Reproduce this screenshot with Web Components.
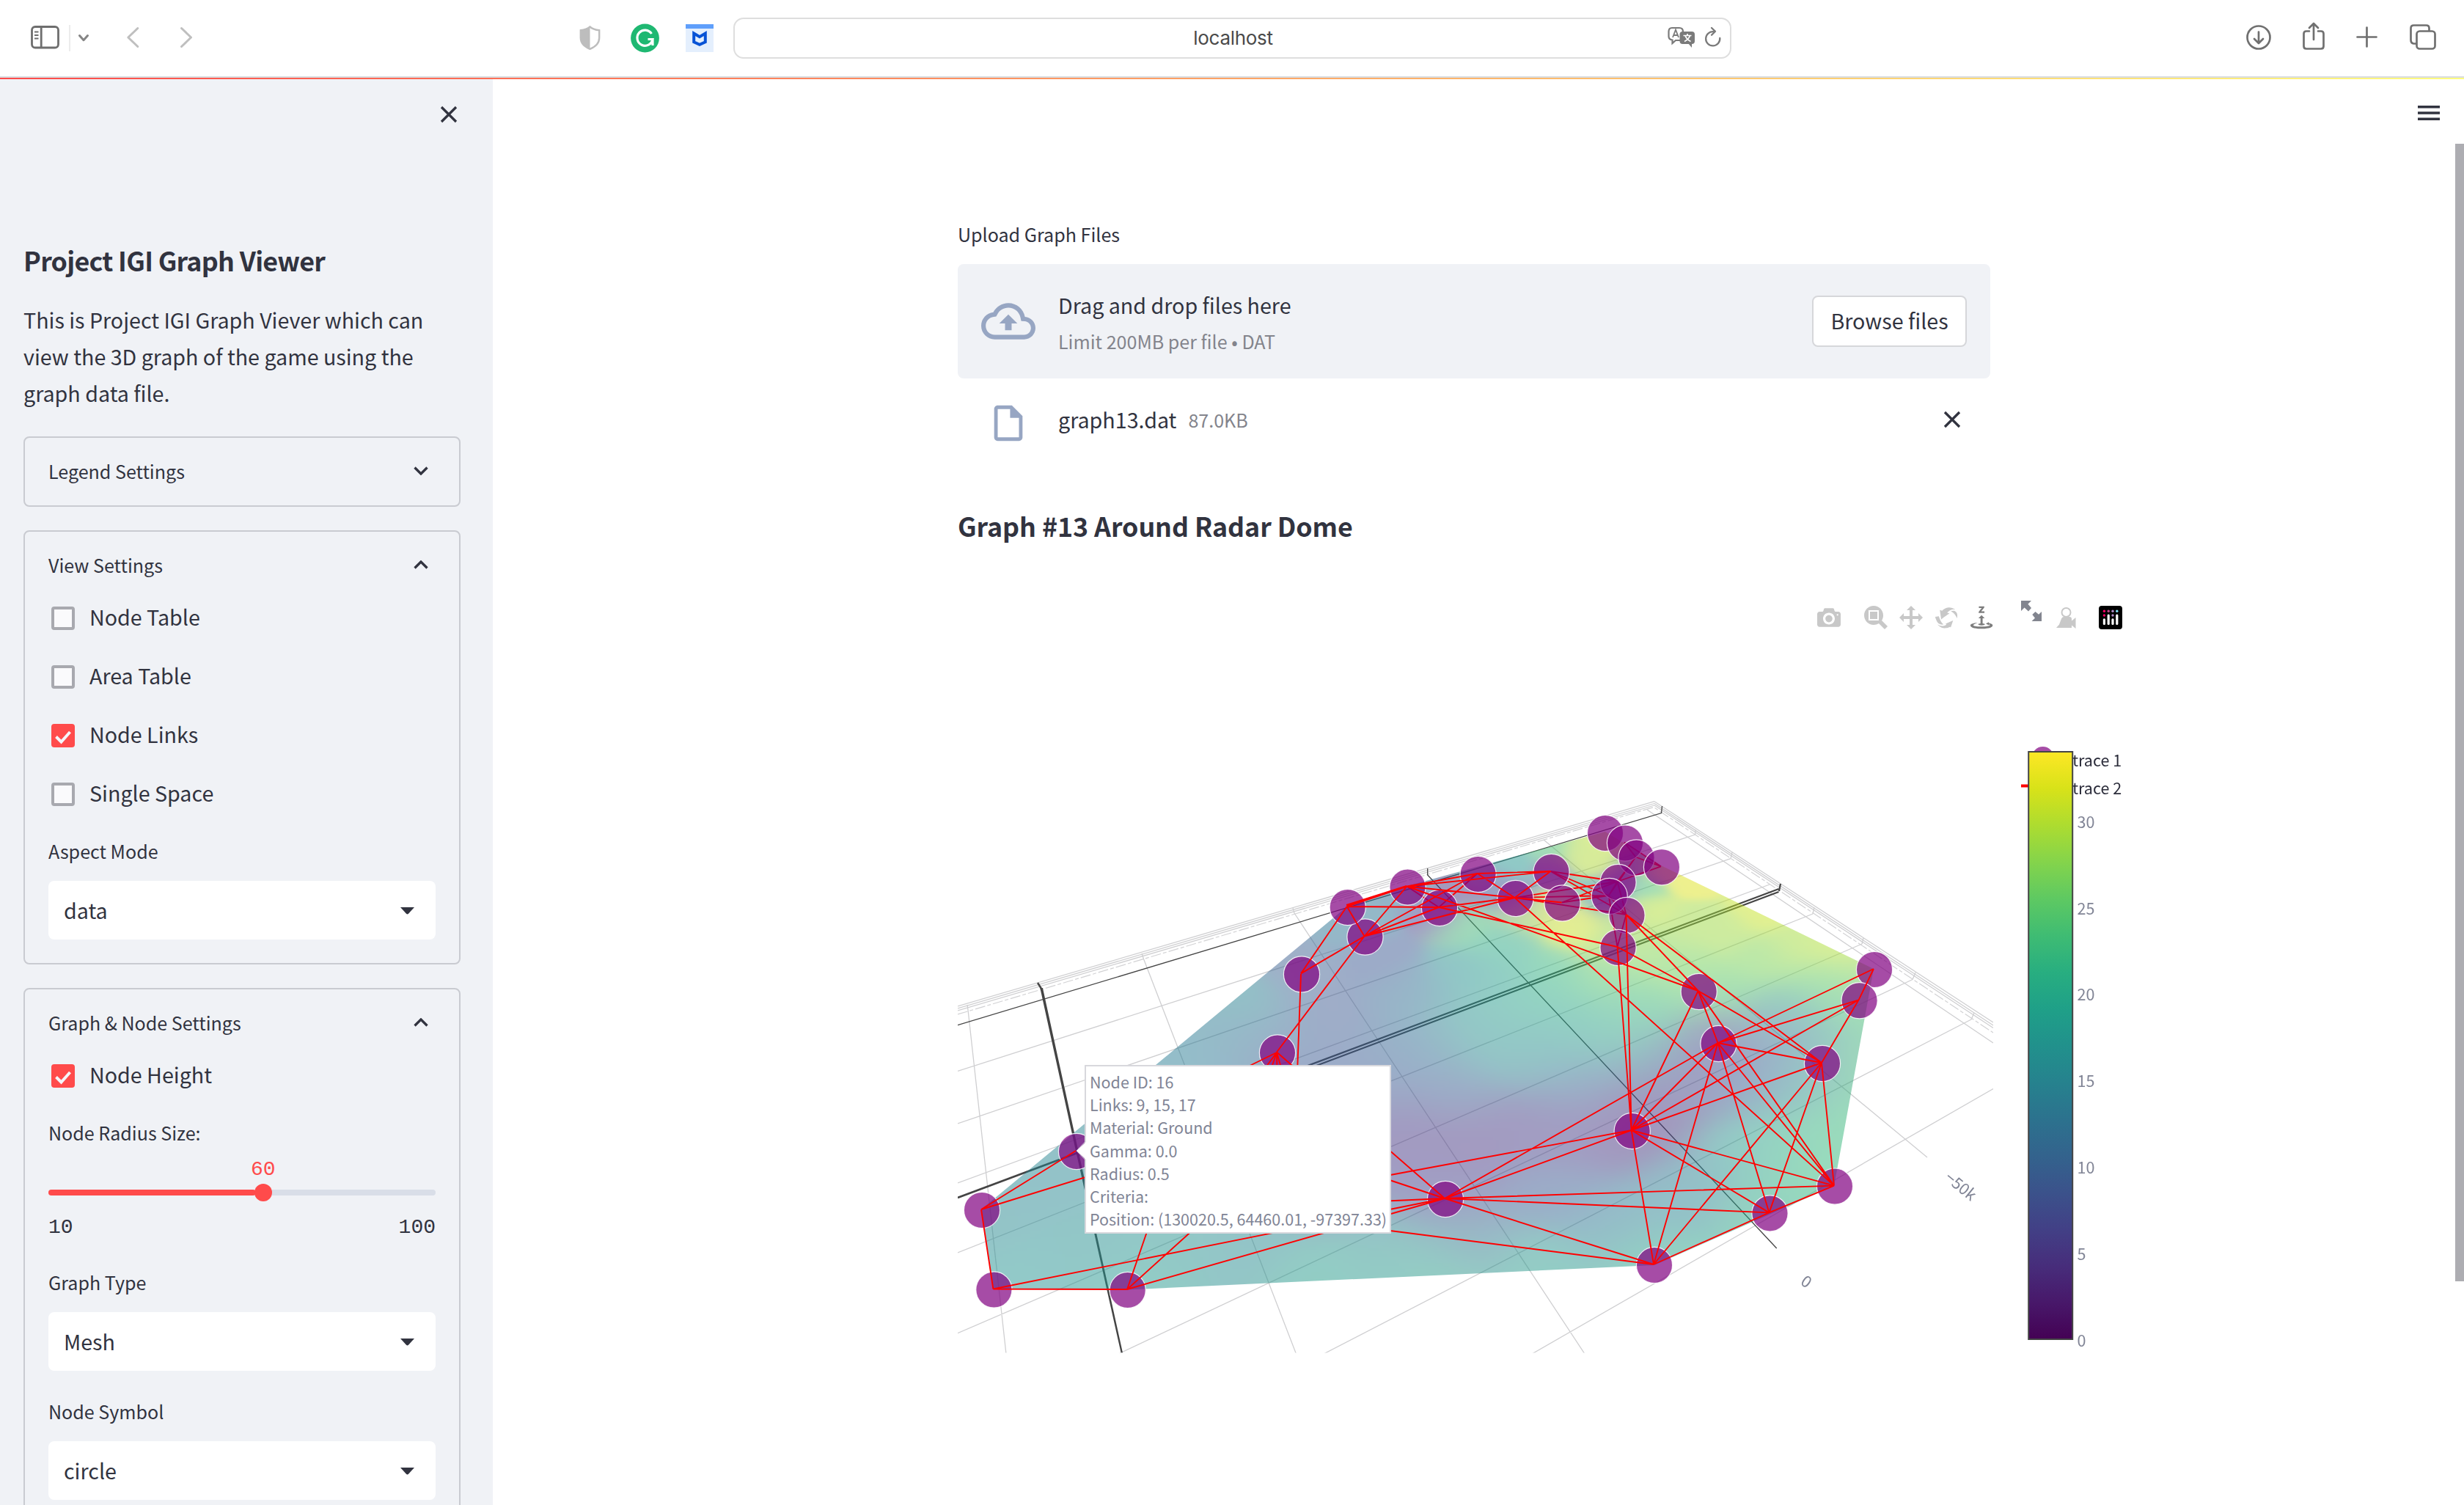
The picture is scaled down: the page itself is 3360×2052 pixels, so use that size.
<!DOCTYPE html>
<html lang="en">
<head>
<meta charset="utf-8">
<title>Project IGI Graph Viewer</title>
<style>
html,body{margin:0;height:2052px;overflow:hidden;background:#fff}
body{font-family:"Noto Sans CJK JP","Noto Sans",sans-serif;color:#31333f;
 --lg:35.8px;--md:28.65px;--sm:25.07px;--xs:21.5px}
</style>
</head>
<body>
<igi-app></igi-app>
<script>
const ICONS={
 side:['42 30 39 44','<g fill="none" stroke="#6e6e6e" stroke-width="2.8"><rect x="43.5" y="36.5" width="36" height="28.5" rx="4.5"/><path d="M56.2 37V65"/><path d="M47 43.5h5.5M47 48h5.5M47 52.5h5.5" stroke-width="2"/></g>'],
 caret:['107 30 14 44','<path d="M108.5 48.5l5.5 6.2 5.5-6.2" fill="none" stroke="#858585" stroke-width="3" stroke-linecap="round" stroke-linejoin="round"/>'],
 back:['172 30 19 44','<path d="M187.8 38.500l-13 12.500 13 12.500" fill="none" stroke="#bfbfbf" stroke-width="3" stroke-linecap="round" stroke-linejoin="round"/>'],
 fwd:['244 30 20 44','<path d="M247.500 38.500l13 12.500-13 12.500" fill="none" stroke="#bfbfbf" stroke-width="3" stroke-linecap="round" stroke-linejoin="round"/>'],
 shield:['790 30 29 44','<path d="M804.500 36.500c4 3.500 8 4.300 12.700 4.800v10c0 7.500-5 12.500-12.700 15.500-7.700-3-12.700-8-12.700-15.500v-10c4.700-.5 8.700-1.300 12.700-4.800z" fill="none" stroke="#bdbdbd" stroke-width="2.400"/><path d="M804.500 36v31c-7.700-3-12.700-8-12.700-15.500v-10c4.700-.5 8.700-1.300 12.700-5.500z" fill="#bdbdbd"/>'],
 gram:['860 30 39 44','<circle cx="879.500" cy="52" r="19.400" fill="#1fb872"/><path d="M888.500 46a10.600 10.600 0 1 0 1.500 7.500h-6.500M890 53.500v8.500" fill="none" stroke="#fff" stroke-width="3.200"/>'],
 mc:['935 30 38 44','<rect x="935" y="33" width="38" height="38" fill="#e4effd"/><rect x="935" y="33" width="38" height="6" fill="#5f9ffb"/><path d="M946.200 45.500l7.800 4.600 7.800-4.600v11.800l-7.800 3.500-7.800-3.500z" fill="none" stroke="#0853d6" stroke-width="4"/>'],
 trans:['2274 30 38 44','<path d="M2280 38h10q5 0 5 5v8q0 4-4 4h-6l-4.500 4v-4.500q-5-.5-5-5v-6.500q0-5 4.500-5z" fill="none" stroke="#7a7a7a" stroke-width="2.200"/><path d="M2281 51l4-10.500 4 10.500M2282.500 48h5" fill="none" stroke="#7a7a7a" stroke-width="1.800"/><rect x="2290.500" y="43" width="20.500" height="17" rx="4" fill="#7a7a7a"/><path d="M2302 59l5 6v-6z" fill="#7a7a7a"/><path d="M2295.500 48.500h11M2301 46v2.500M2297 56.500q6-3 7.500-8M2305.500 56.500q-6-3-7.500-8" fill="none" stroke="#fff" stroke-width="1.700"/>'],
 reload:['2324 30 24 44','<path d="M2337 43.300a9.600 9.600 0 1 0 8.300 8.700" fill="none" stroke="#7a7a7a" stroke-width="2.300" stroke-linecap="round"/><path d="M2333.500 38.500l5 4.800-5 5" transform="translate(.5 -.5)" fill="none" stroke="#7a7a7a" stroke-width="2.300" stroke-linecap="round" stroke-linejoin="round"/>'],
 down:['3062 30 36 44','<g fill="none" stroke="#707070" stroke-width="2.700" stroke-linecap="round" stroke-linejoin="round"><circle cx="3080" cy="51" r="15.500"/><path d="M3080 43.500v15M3074 53l6 6 6-6"/></g>'],
 share:['3139 28 32 44','<g fill="none" stroke="#707070" stroke-width="2.700" stroke-linecap="round" stroke-linejoin="round"><path d="M3149 42.500h-4q-3.500 0-3.500 3.500v17q0 3.500 3.500 3.500h20q3.500 0 3.500-3.500v-17q0-3.500-3.500-3.500h-4"/><path d="M3155 54v-21.500M3149 38l6-6 6 6"/></g>'],
 plus:['3213 30 30 44','<path d="M3227.500 37.500v26M3214.500 50.500h26" stroke="#707070" stroke-width="2.700" stroke-linecap="round"/>'],
 tabs:['3285 30 38 44','<g fill="none" stroke="#707070" stroke-width="2.700"><path d="M3295 59.500h-3.500q-4-.5-4-5v-16q0-4 4-4h17q4 0 4 4v4"/><rect x="3295.500" y="42.500" width="25" height="24" rx="4"/></g>'],
 menu:['0 0 30 20','<path d="M0 0h30v3.600h-30zM0 8.200h30v3.600h-30zM0 16.400h30v3.600h-30z" fill="#31333f"/>'],
 x:['0 0 24 24','<path d="M2 2l20 20M22 2l-20 20" stroke="#31333f" stroke-width="3.300"/>'],
 chev:['0 0 20 12','<path d="M1.500 1.500l8.500 8.500 8.500-8.500" fill="none" stroke="#31333f" stroke-width="3.300"/>'],
 tri:['0 0 19 10','<path d="M0 0h19l-8 8.800q-1.500 1.400-3 0z" fill="#31333f"/>'],
 check:['0 0 32 32','<path d="M6.500 17.500l7 7 12-13.500" fill="none" stroke="#f5f6fa" stroke-width="4"/>'],
 cloud:['0 0 24 24','<path d="M19.350 10.040C18.670 6.590 15.640 4 12 4 9.110 4 6.600 5.640 5.350 8.040 2.340 8.360 0 10.910 0 14c0 3.310 2.690 6 6 6h13c2.760 0 5-2.240 5-5 0-2.640-2.050-4.780-4.650-4.960zM19 18H6c-2.210 0-4-1.790-4-4 0-2.050 1.530-3.760 3.560-3.970l1.070-.11.5-.95C8.080 7.140 9.940 6 12 6c2.620 0 4.880 1.860 5.390 4.430l.3 1.500 1.530.11c1.560.1 2.780 1.410 2.780 2.960 0 1.650-1.350 3-3 3zM8 13h2.550v3h2.900v-3H16l-4-4z" fill="#97a6c3"/>'],
 file:['0 0 24 24','<path d="M6 2c-1.100 0-1.990.9-1.990 2L4 20c0 1.100.89 2 1.990 2H18c1.100 0 2-.9 2-2V8l-6-6H6zm0 18V4h7v5h5v11H6z" fill="#97a6c3"/>'],
 camera:['0 0 1000 1000','<path transform="matrix(1 0 0 -1 0 850)" fill="#c8c8c8" d="m500 450c-83 0-150-67-150-150 0-83 67-150 150-150 83 0 150 67 150 150 0 83-67 150-150 150z m400 150h-120c-16 0-34 13-39 29l-31 93c-6 15-23 28-40 28h-340c-16 0-34-13-39-28l-31-94c-6-15-23-28-40-28h-120c-55 0-100-45-100-100v-450c0-55 45-100 100-100h800c55 0 100 45 100 100v450c0 55-45 100-100 100z m-400-550c-138 0-250 112-250 250 0 138 112 250 250 250 138 0 250-112 250-250 0-138-112-250-250-250z m365 380c-19 0-35 16-35 35 0 19 16 35 35 35 19 0 35-16 35-35 0-19-16-35-35-35z"/>'],
 zoom:['0 0 1000 1000','<path transform="matrix(1 0 0 -1 0 850)" fill="#c8c8c8" d="m1000-25l-250 251c40 63 63 138 63 218 0 224-182 406-407 406-224 0-406-182-406-406s183-406 407-406c80 0 155 22 218 62l250-250 125 125z m-812 250l0 438 437 0 0-438-437 0z m62 375l313 0 0-312-313 0 0 312z"/>'],
 pan:['0 0 1000 1000','<path transform="matrix(1 0 0 -1 0 850)" fill="#c8c8c8" d="m1000 350l-187 188 0-125-250 0 0 250 125 0-188 187-187-187 125 0 0-250-250 0 0 125-188-188 186-187 0 125 252 0 0-250-125 0 187-188 188 188-125 0 0 250 250 0 0-126 187 188z"/>'],
 orbit:['0 0 1000 1000','<path transform="matrix(1 0 0 -1 0 850)" fill="#c8c8c8" d="m922 660c-5 4-9 7-14 11-359 263-580-31-580-31l-102 28 58-400c0 1 1 1 2 2 118 108 351 249 351 249s-62 27-100 42c88 83 222 183 347 122 16-8 30-17 44-27-2 1-4 2-6 4z m36-329c0 0 64 229-88 296-62 27-124 14-175-11 157-78 225-208 249-266 8-19 11-31 11-31 2 5 6 15 11 32-5-13-8-20-8-20z m-775-239c70-31 117-50 198-32-121 80-199 346-199 346l-96-15-58-12c0 0 55-226 155-287z m603 133l-317-139c0 0 4-4 19-14 7-5 24-15 24-15s-177-147-389 4c235-287 536-112 536-112l31-22 100 299-4-1z m-298-153c6-4 15-9 15-9-6 4-11 7-15 9z"/>'],
 table:['0 0 1000 1000','<path transform="matrix(1 0 0 -1 0 850)" fill="#7d7d7d" d="m833 5l-17 108v41l-130-65 130-66c0 0 0 38 0 39 0-1 36-14 39-25 4-15-6-22-16-30-15-12-39-16-56-20-90-22-187-23-279-23-261 0-341 34-353 59 3 60 228 110 228 110-140-8-351-35-351-116 0-120 293-142 474-142 155 0 477 22 477 142 0 50-74 79-163 96z m-374 94c-58-5-99-21-99-40 0-24 65-43 144-43 79 0 143 19 143 43 0 19-42 34-98 40v216h87l-132 135-133-135h88v-216z m167 515h-136v1c16 16 31 34 46 52l84 109v54h-230v-71h124v-1c-16-17-28-32-44-51l-89-114v-51h245v72z"/>'],
 expand:['0 0 28 28','<path d="M0 0h14L0 14zM3 8L8 3L14 10L10 14.500zM28 28h-13.500L28 15zM15.300 19L19.500 15L25.500 20L20 25z" fill="#82858f"/>'],
 last:['0 0 32 32','<circle cx="16.500" cy="9" r="6" fill="none" stroke="#c8c8c8" stroke-width="2"/><path d="M3 30l4-4.500 3-8q1-2.500 3-2.500h8q3 0 3 3v2.500l5.500-4.500v15l-5.500-4.500v3.500z" fill="#c8c8c8"/>'],
 plotly:['0 0 32 32','<rect width="32" height="32" rx="4"/><g fill="#fff"><rect x="5.800" y="17.300" width="3.200" height="8.700" rx="1.500"/><rect x="11.600" y="11.600" width="3.200" height="14.400" rx="1.500"/><rect x="17.400" y="17.300" width="3.200" height="8.700" rx="1.500"/><rect x="23.200" y="11.600" width="3.200" height="14.400" rx="1.500"/></g><circle cx="7.400" cy="7.300" r="1.700" fill="#f06"/><circle cx="7.400" cy="13" r="1.700" fill="#f06"/><circle cx="13.200" cy="7.300" r="1.700" fill="#c0488c"/><circle cx="19" cy="7.300" r="1.700" fill="#b08cc8"/><circle cx="19" cy="13" r="1.700" fill="#b08cc8"/><circle cx="24.800" cy="7.300" r="1.700" fill="#7fe0f5"/>']
};
const define=(name,html,setup)=>customElements.define(name,class extends HTMLElement{
  constructor(){super();this.attachShadow({mode:'open'})}
  connectedCallback(){this.shadowRoot.innerHTML=typeof html==='function'?html(this):html;if(setup)setup(this)}
});
define('igi-icon',el=>{const[v,m]=ICONS[el.getAttribute('name')];
  return `<style>:host{display:block;flex:none}svg{display:block;width:100%;height:100%}</style><svg viewBox="${v}">${m}</svg>`});

define('browser-bar',`<style>
:host{display:flex;align-items:center;background:#fff;border-bottom:2px solid #d9dcdf;box-sizing:border-box;height:106px;flex:none}
igi-icon{height:44px}
.sep{width:2px;height:36px;background:#ececec;margin-left:13px}
.url{box-sizing:border-box;margin-left:27px;width:1361px;height:56px;border:2px solid #dedede;border-radius:14px;display:flex;align-items:center;justify-content:flex-end}
.url span{flex:1;text-align:center;font:26px/40px Inter,sans-serif;color:#4a4a4a;padding-left:87px;letter-spacing:-.3px}
</style>
<igi-icon name="side" style="width:39px;margin-left:42px"></igi-icon><div class="sep"></div>
<igi-icon name="caret" style="width:14px;margin-left:11px"></igi-icon>
<igi-icon name="back" style="width:19px;margin-left:51px"></igi-icon>
<igi-icon name="fwd" style="width:20px;margin-left:53px"></igi-icon>
<igi-icon name="shield" style="width:29px;margin-left:526px"></igi-icon>
<igi-icon name="gram" style="width:39px;margin-left:41px"></igi-icon>
<igi-icon name="mc" style="width:38px;margin-left:36px"></igi-icon>
<div class="url"><span>localhost</span><igi-icon name="trans" style="width:38px"></igi-icon><igi-icon name="reload" style="width:24px;margin:0 11px 0 12px"></igi-icon></div>
<igi-icon name="down" style="width:36px;margin-left:701px"></igi-icon>
<igi-icon name="share" style="width:32px;margin:-4px 0 0 41px"></igi-icon>
<igi-icon name="plus" style="width:30px;margin-left:42px"></igi-icon>
<igi-icon name="tabs" style="width:38px;margin-left:42px"></igi-icon>`);

define('side-panel',el=>`<style>
:host{display:block;flex:none;box-sizing:border-box;border:2px solid #c9cbd1;border-radius:8px;padding:0 32px 32px;margin-bottom:32px}
:host([closed]){padding-bottom:2px}
header{display:flex;align-items:center;justify-content:space-between;height:90px;font-size:var(--sm);line-height:90px;padding-right:10px}
igi-icon{width:20px;height:12px}
:host(:not([closed])) igi-icon{transform:rotate(180deg)}
</style><header><span>${el.getAttribute('label')}</span><igi-icon name="chev"></igi-icon></header><slot></slot>`);

define('check-box',`<style>
:host{display:flex;align-items:center;gap:20px;height:48px;padding-left:4px;margin-bottom:32px;font-size:var(--md);line-height:43px}
i{box-sizing:border-box;width:32px;height:32px;border:4px solid #a8a9af;border-radius:4px;background:#fafafc}
igi-icon{display:none;width:32px;height:32px}
:host([checked]) i{border:0;background:#ff4b4b}:host([checked]) igi-icon{display:block}
span{padding-bottom:4px}
</style><i><igi-icon name="check"></igi-icon></i><span><slot></slot></span>`);

define('select-box',el=>`<style>
:host{display:block}
label{display:block;font-size:var(--sm);line-height:40px;height:40px}
div{display:flex;align-items:center;justify-content:space-between;height:80px;box-sizing:border-box;margin-top:21px;padding:0 29px 0 21px;background:#fff;border-radius:8px;font-size:var(--md);line-height:44px}
igi-icon{width:19px;height:10px;margin-top:2px}
</style><label>${el.getAttribute('label')}</label><div><span><slot></slot></span><igi-icon name="tri"></igi-icon></div>`);

define('range-slider',`<style>
:host{display:block;--p:55.5%}
label{display:block;font-size:var(--sm);line-height:40px}
.v,.t{font-family:"Liberation Mono",monospace;font-size:28px;line-height:36px;height:36px}
.v{color:#ff4b4b;width:34px;margin:13px 0 0 calc(var(--p) - 17px)}
.r{height:24px;margin-top:1px;display:flex;align-items:center}
.a,.b{height:8px;border-radius:4px}.a{width:calc(var(--p) - 10px);background:#ff4b4b}.b{flex:1;background:#d9dee8;margin-left:-4px}
.k{width:24px;height:24px;border-radius:50%;background:#ff4b4b;margin-left:-2px;z-index:1}
.t{display:flex;justify-content:space-between;margin-top:18px}
</style><label><slot></slot></label><div class="v">60</div><div class="r"><div class="a"></div><div class="k"></div><div class="b"></div></div><div class="t"><span>10</span><span>100</span></div>`);

define('side-bar',`<style>
:host{display:block;flex:none;box-sizing:border-box;width:672px;height:1946px;background:#f0f2f6;padding:38px 44px 0 32px;overflow:hidden}
.c{width:24px;height:24px;margin-left:568px}
h1{font-size:var(--lg);line-height:48px;margin:162.400px 0 0;font-weight:700;letter-spacing:-.72px}
p{font-size:var(--md);line-height:50.200px;margin:32.600px 0 33px;white-space:nowrap}
</style><igi-icon class="c" name="x"></igi-icon>
<h1>Project IGI Graph Viewer</h1>
<p>This is Project IGI Graph Viever which can<br>view the 3D graph of the game using the<br>graph data file.</p>
<side-panel label="Legend Settings" closed></side-panel>
<side-panel label="View Settings">
<check-box style="margin-top:4px">Node Table</check-box><check-box>Area Table</check-box><check-box checked>Node Links</check-box><check-box style="margin-bottom:33px">Single Space</check-box>
<select-box label="Aspect Mode">data</select-box></side-panel>
<side-panel label="Graph &amp; Node Settings">
<check-box checked style="margin:4px 0 33px">Node Height</check-box>
<range-slider>Node Radius Size:</range-slider>
<select-box label="Graph Type" style="margin-top:36px">Mesh</select-box>
<select-box label="Node Symbol" style="margin-top:35px">circle</select-box>
<div style="height:60px"></div></side-panel>`);

define('file-uploader',`<style>
:host{display:block;width:1408px}
label{display:block;font-size:var(--sm);line-height:40px}
.d{display:flex;align-items:center;box-sizing:border-box;height:156px;margin-top:20.900px;padding:0 32px;background:#f0f2f6;border-radius:8px}
.cl{width:74px;height:74px}
.m{flex:1;margin-left:31px}
.m div{font-size:var(--md);line-height:48px;padding-top:1px}.m small{display:block;font-size:var(--sm);line-height:40px;margin-top:4.900px;color:#83848c}
button{box-sizing:border-box;width:211px;height:70px;border:2px solid #d6d7da;border-radius:8px;background:#fff;font:var(--md)/44px "Noto Sans CJK JP",sans-serif;color:#31333f;padding:0 0 2px;white-space:nowrap}
.f{display:flex;align-items:center;height:58px;margin-top:32px;padding:0 40px 0 40px;font-size:var(--md);line-height:44px}
.f span,.f small,.f .x{margin-bottom:9px}
.f span{margin-left:39px}.f small{font-size:var(--sm);color:#83848c;margin-left:16px;flex:1}
</style><label>Upload Graph Files</label>
<div class="d"><igi-icon class="cl" name="cloud"></igi-icon><div class="m"><div>Drag and drop files here</div><small>Limit 200MB per file • DAT</small></div><button>Browse files</button></div>
<div class="f"><igi-icon name="file" style="width:58px;height:58px"></igi-icon><span>graph13.dat</span><small>87.0KB</small><igi-icon class="x" name="x" style="width:24px;height:24px"></igi-icon></div>`);

define('mode-bar',`<style>
:host{display:flex;justify-content:flex-end;align-items:flex-start;padding:42px 12px 0 0}
igi-icon{width:32px;height:32px;margin-left:16px}
</style><igi-icon name="camera"></igi-icon><igi-icon name="zoom" style="margin-left:32px"></igi-icon><igi-icon name="pan"></igi-icon><igi-icon name="orbit"></igi-icon><igi-icon name="table"></igi-icon><igi-icon name="expand" style="width:28px;height:28px;margin:-7px 0 0 38px"></igi-icon><igi-icon name="last" style="margin-left:17px"></igi-icon><igi-icon name="plotly" style="margin-left:29px"></igi-icon>`);

define('node-tooltip',`<style>
:host{display:block;box-sizing:border-box;width:418px;height:230px;border:2px solid #d8d8dd;background:#fff;padding:5px 0 0 5px;font-size:var(--xs);line-height:31.200px;color:#808495;white-space:nowrap}
svg{position:absolute;left:-14px;top:102px}
</style><svg width="15" height="26" viewBox="0 0 15 26"><path d="M15 0L1 13L15 26z" fill="#fff"/><path d="M12.500 1L1 13L12.500 25" fill="none" stroke="#d8d8dd" stroke-width="1"/></svg><slot></slot>`);

/* Node positions on the projected plane, 1-based */
const N=[0,[1339,1650],[1355.4,1758.500],[1537.700,1759],[1468,1570],[1742,1435.500],[1775,1328.400],[1861.500,1277.500],[1837.700,1237],[1919.500,1209.500],[1963,1238],[2015.600,1192],[1971,1635],[2066.500,1225],[2115.500,1189],[2130.500,1231.500],[2189,1136],[2216,1149.500],[2231.500,1169.500],[2266,1182.300],[2206.500,1203],[2194.700,1222],[2218.500,1248],[2206.500,1292],[2316.700,1352],[2343.500,1423],[2225.700,1542],[2556,1322],[2535.600,1364.300],[2485,1450],[2502,1617.600],[2413.500,1654.400],[2256,1725]];
const under='14-20 14-21 14-22 15-20 15-21 20-21 20-18 20-22 21-22 21-18 21-23 22-23 17-18 17-19 18-19 20-19 13-21 13-20 13-22 10-11 9-10';
const over='1-4 1-2 2-3 2-12 3-12 5-12 6-7 6-8 7-8 7-5 7-9 7-10 7-11 7-13 8-9 8-10 9-11 9-14 9-13 11-14 11-13 10-13 13-14 13-15 13-30 9-24 10-23 22-24 22-29 22-26 23-26 23-24 24-29 24-25 24-26 24-30 25-26 25-27 25-28 25-29 25-30 25-31 25-32 25-12 26-12 26-28 26-29 26-30 26-31 26-32 27-28 28-29 29-30 29-31 29-32 30-31 31-32 12-30 12-31 12-32';
const seg=s=>s.split(' ').map(e=>{const[a,b]=e.split('-').map(i=>N[i]);return `M${a[0]-1} ${a[1]-1}L${b[0]-1} ${b[1]-1}`}).join('');
const extra='M1338 1649L1600 1568M1741 1435L1690 1460M1741 1435L1700 1490M1741 1435L1722 1490M1741 1435L1742 1490M1741 1435L1757 1490M1774 1328L1768 1490M1537 1758L1569 1665M1537 1758L1640 1665M2225 1541L1880 1605M1970 1634L1880 1604M1970 1634L1880 1638M2255 1724L1880 1676M1918 1208L1836 1234';
const light=[[1306,1372,2256,1092.700],[1306,1375,2256,1095.500],[1306,1378,2256,1098],[2256,1092.700,2718,1394],[2256,1095.500,2718,1398],[2256,1098,2718,1401.500],[2246,1104,2718,1422],
[1320,1377,1372,1846],[1559.500,1307.500,1767.500,1846],[1765,1245,2161,1846],[2105,1145,2628,1578],
[1306,1460.500,2311.700,1138],[1306,1532,2360,1170.700],[1306,1613,2413,1206],[1306,1708,2472,1246],[1306,1817.600,2539,1287],[1525,1846,2608,1335.500],[1805,1846,2688,1390],[2089,1846,2718,1484.500],
[1319,1370,1320,1377],[1557,1300,1559.500,1307.500],[1763,1238,1765,1245],[2311.700,1138,2312,1131],[2360,1170.700,2362,1162],[2472,1246,2474,1237],[2539,1287,2541,1279],[2608,1335.500,2612,1326],[2688,1390,2692,1381]];
const SAMPLES=`1340,1650,93c3c7 1400,1740,92c9c8 1537,1758,92cdc6 1420,1600,93c2c8 1600,1500,96bfc8 1640,1440,93bdc9 1700,1400,98b8c8 1700,1372,90c3c6 1775,1328,9fb0c8 1850,1260,94b8c8 1742,1435,9caac8 1800,1380,9fabc8 1880,1310,9da9c8 1920,1350,97b5c8 1990,1330,90c6c6 2050,1350,92cec5 2000,1400,93c8c6 1930,1430,98b0c8 1980,1490,9bafc8 1920,1540,a298c0 2000,1560,a498bf 2080,1530,a29bc1 1950,1600,a19cc3 1971,1635,a09fc4 2225,1542,a394bc 2150,1480,9ab0c8 2150,1545,a39bc2 2100,1440,93c2c7 2150,1400,91cec5 2120,1620,9bacc8 2000,1680,98b9c6 1900,1700,93c6c6 1800,1740,92cdc4 1950,1730,93d0c3 2100,1730,93cdc5 2256,1724,92d3c2 2200,1670,94bdc8 2300,1620,93bfc8 2380,1560,92cbc6 2413,1654,94d3c0 2450,1560,97dabd 2501,1616,98dbbc 2484,1450,96c5c6 2440,1480,93cac6 2540,1450,a3e0b6 2555,1321,c8eaa2 2535,1364,9ddcba 2500,1290,daef96 2400,1240,e2f090 2300,1195,eef08e 2265,1181,eef08e 2300,1260,cdeb9f 2400,1310,b8e7aa 2480,1340,a9e3b2 2300,1320,b4e6ac 2350,1360,a4dfb6 2440,1378,92c8c6 2420,1410,9bb4c9 2343,1422,a394c0 2300,1460,a398bf 2260,1500,a396bd 2350,1470,9ba8c6 2400,1460,9cacc9 2250,1440,91bfc8 2220,1400,93d0c3 2200,1340,a6e0b5 2240,1380,9ddcb9 2206,1292,c4e8a4 2150,1260,e4ef92 2130,1231,e3e893 2080,1240,cfeaa0 2000,1255,a0ddb8 2066,1224,9ea5c5 1963,1237,a49ac4 1995,1215,a596bb 2040,1205,9b9fc5 1919,1209,93b5c8 2015,1192,92c5c6 2060,1180,8fcac6 2115,1160,a0ddb8 2115,1189,9fb5c4 2150,1165,d6eb9a 2189,1136,daef96 2180,1180,d8ec98 2216,1149,e6ef90 2206,1202,96a5c6 2195,1221,92b0c8 2170,1215,93c8c4 2231,1175,9abfb0 2240,1210,a0ddb8 2218,1248,c8e9a0 2050,1290,92d2c2 2120,1330,97d9bd 2060,1420,93c8c6 1620,1700,92c8c6 1700,1690,93c3c7 1480,1700,92c6c7 2350,1270,cdeb9f 2450,1290,cfec9d 2260,1290,c0e8a6 2250,1240,dcef95 2100,1380,92d3c2 1800,1620,9dabc7 1850,1480,9cacc8 2520,1520,9bdcba`.split(' ').map(s=>{const[x,y,c]=s.split(',');return[+x,+y,parseInt(c.slice(0,2),16),parseInt(c.slice(2,4),16),parseInt(c.slice(4),16)]});
const HULL=[[1338,1649],[1837,1236],[1919,1208],[2189,1134],[2265,1180],[2555,1321],[2501,1617],[2256,1725],[1537,1758.500],[1355,1758]];
const VIR=['440154','48186a','472d7b','424086','3b528b','33638d','2c728e','26828e','21918c','1fa088','28ae80','3fbc73','5ec962','84d44b','addc30','d8e219','fde725'];
const VB='1306 784 1600 1076';

define('graph-scene',`<style>
:host{display:grid;position:relative;width:1600px;height:1076px}
:host>*{grid-area:1/1}
svg.l,canvas,.st{grid-area:1/1}
svg.l{display:block;width:1600px;height:1076px}
.top{z-index:2}
canvas{z-index:1;width:1600px;height:1076px;opacity:.5;clip-path:polygon(${HULL.map(p=>(p[0]-1306)+'px '+(p[1]-784)+'px').join(',')})}
text{font-size:21.500px;fill:#808495}
mode-bar{grid-area:1/1;z-index:3}
node-tooltip{position:absolute;left:173px;top:668px;z-index:3}
</style>
<svg class="l" viewBox="${VB}"><defs><clipPath id="c"><rect x="1306" y="1000" width="1412" height="844.500"/></clipPath></defs><g clip-path="url(#c)" fill="none">
<path d="${light.map(l=>`M${l[0]} ${l[1]}L${l[2]} ${l[3]}`).join('')}" stroke="#cfcfd1" stroke-width="1.300"/>
<path d="M1306 1383L2255 1100.500L2718 1408" stroke="#d2d2d4" stroke-width="1.200" stroke-dasharray="14 3 5 3"/>
<path d="M1306 1397.700L2265.500 1108.500L2266.500 1099M1946.700 1184V1193L2422.700 1702" stroke="#444" stroke-width="1.300"/>
<path d="M1415 1340L1420 1348" stroke="#444" stroke-width="2.500"/>
<path d="M1418.300 1347h3.600L1470.600 1570L1531 1844.500h-2.400L1467.200 1570z" fill="#444"/>
<path d="M1306 1633L1469 1572" stroke="#444" stroke-width="2.600"/>
<path d="M1469 1571L2425.500 1212M1469 1575.500L2425.500 1216M2426 1215L2428 1205" stroke="#444" stroke-width="2.200"/></g></svg>
<canvas width="400" height="269"></canvas>
<svg class="l top" viewBox="${VB}"><defs><linearGradient id="v" x1="0" y1="1" x2="0" y2="0">${VIR.map((c,i)=>`<stop offset="${i/16}" stop-color="#${c}"/>`).join('')}</linearGradient></defs>
<path d="${seg(under)}" stroke="#f00" stroke-width="1.800"/>
<g fill="#800080" fill-opacity=".7" stroke="#fff" stroke-opacity=".85" stroke-width="1.200">${N.slice(1).map(p=>`<circle cx="${p[0]}" cy="${p[1]}" r="24.600"/>`).join('')}</g>
<path d="${seg(over)}${extra}" stroke="#f00" stroke-width="1.900"/>
<text transform="translate(2674 1617) rotate(39)" text-anchor="middle" y="8">−50k</text>
<text transform="translate(2463.500 1747) rotate(35)" text-anchor="middle" y="8">0</text>
<circle cx="2785.700" cy="1033" r="15" fill="#a64da6"/><path d="M2756 1071.500h12" stroke="#f00" stroke-width="4"/>
<rect x="2766.200" y="1025" width="60" height="801" fill="url(#v)" stroke="#444" stroke-width="2"/>
<text x="2826" y="1044.500" style="fill:#2b2c3a">trace 1</text><text x="2826" y="1082.500" style="fill:#2b2c3a">trace 2</text>
${[0,5,10,15,20,25,30].map(v=>`<text x="2832.500" y="${1835.500-v*23.560}">${v}</text>`).join('')}
</svg>
<mode-bar></mode-bar>
<node-tooltip>Node ID: 16<br>Links: 9, 15, 17<br>Material: Ground<br>Gamma: 0.0<br>Radius: 0.5<br>Criteria:<br>Position: (130020.5, 64460.01, -97397.33)</node-tooltip>`,el=>{
  const cx=el.shadowRoot.querySelector('canvas').getContext('2d'),im=cx.createImageData(400,269);
  for(let j=0;j<269;j++)for(let i=0;i<400;i++){
    const x=1306+i*4+2,y=784+j*4+2;if(y<1120||y>1770)continue;
    const t=Math.min(1,Math.max(0,(y-1215)/200)),s1=13+25*t,q=2*s1*s1;
    let w=0,r=0,g=0,b=0;
    for(const s of SAMPLES){const dx=(x-s[0])*.8,dy=(y-s[1])*1.1,d=dx*dx+dy*dy,k=Math.exp(-d/q)+3e4/((d+900)*(d+900)*(d+900))*900;w+=k;r+=k*s[2];g+=k*s[3];b+=k*s[4]}
    const o=(j*400+i)*4;im.data[o]=2*r/w-255;im.data[o+1]=2*g/w-255;im.data[o+2]=2*b/w-255;im.data[o+3]=255}
  cx.putImageData(im,0,0);
});

define('main-view',`<style>
:host{display:flex;flex:1;justify-content:space-between;background:#fff}
main{padding-left:634px;width:1600px}
h2{font-size:var(--lg);line-height:48px;margin:85.700px 0 44.300px;font-weight:700;letter-spacing:-.08px}
file-uploader{margin-top:193.100px}
.r{display:flex;flex-direction:column;align-items:flex-end}
.m{width:30px;height:20px;margin:38px 33px 0 0}
.s{width:12px;height:1551px;margin-top:32px;background:#adadb2}
</style><main><file-uploader></file-uploader><h2>Graph #13 Around Radar Dome</h2><graph-scene></graph-scene></main>
<div class="r"><igi-icon class="m" name="menu"></igi-icon><div class="s"></div></div>`);

define('igi-app',`<style>
:host{display:flex;flex-direction:column;width:3360px;height:2052px;overflow:hidden}
.g{height:2px;flex:none;background:linear-gradient(90deg,#ff4b4b,#fffd80);z-index:1}
.b{display:flex;flex:1;margin-top:-2px;min-height:0}
</style><browser-bar></browser-bar><div class="g"></div><div class="b"><side-bar></side-bar><main-view></main-view></div>`);
</script>
</body>
</html>
